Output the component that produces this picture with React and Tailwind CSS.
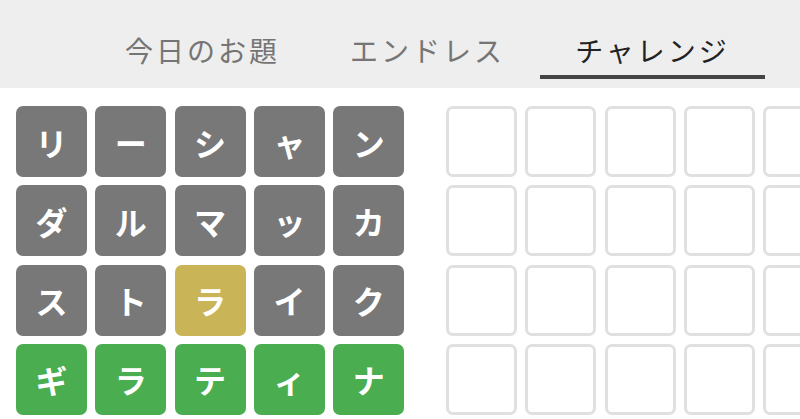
import React from 'react'

const FONT = { fontFamily: '"Noto Sans CJK JP", "Noto Sans", sans-serif' }

const TABS = ['今日のお題', 'エンドレス', 'チャレンジ']
const ACTIVE = 2

// g = 灰色, y = 位置違い, c = 正解
const ROWS = [
  [['リ', 'g'], ['ー', 'g'], ['シ', 'g'], ['ャ', 'g'], ['ン', 'g']],
  [['ダ', 'g'], ['ル', 'g'], ['マ', 'g'], ['ッ', 'g'], ['カ', 'g']],
  [['ス', 'g'], ['ト', 'g'], ['ラ', 'y'], ['イ', 'g'], ['ク', 'g']],
  [['ギ', 'c'], ['ラ', 'c'], ['テ', 'c'], ['ィ', 'c'], ['ナ', 'c']],
]

const TILE_BG = {
  g: 'bg-[#787878]',
  y: 'bg-[#c9b458]',
  c: 'bg-[#4aad4f]',
}

function Tile({ ch, kind }) {
  return (
    <div
      className={`w-[71px] h-[71px] rounded-[7px] flex items-center justify-center text-white text-[32px] font-bold leading-none ${TILE_BG[kind]}`}
    >
      {ch}
    </div>
  )
}

function EmptyTile() {
  return <div className="w-[71px] h-[71px] shrink-0 rounded-[7px] border-[3px] border-[#e0e0e0] bg-white" />
}

export default function App() {
  return (
    <div className="w-[800px] h-[419px] overflow-hidden bg-white" style={FONT}>
      <div className="h-[88px] bg-[#eeeeee] flex pl-[90px]">
        {TABS.map((t, i) => (
          <div key={t} className="w-[225px] shrink-0 flex flex-col justify-end pb-[9px]">
            <span
              className={`text-center text-[28px] leading-[36px] tracking-[3px] font-normal mb-[7px] ${
                i === ACTIVE ? 'text-[#222222]' : 'text-[#757575]'
              }`}
            >
              {t}
            </span>
            <div className={`h-[4px] w-full ${i === ACTIVE ? 'bg-[#444444]' : 'bg-transparent'}`} />
          </div>
        ))}
      </div>

      <div className="flex pt-[18px] pl-[16px] gap-[42px]">
        <div className="flex flex-col gap-[8.3px] shrink-0">
          {ROWS.map((row, r) => (
            <div key={r} className="flex gap-[8.3px]">
              {row.map(([ch, kind], c) => (
                <Tile key={c} ch={ch} kind={kind} />
              ))}
            </div>
          ))}
        </div>

        <div className="flex flex-col gap-[8.3px] shrink-0">
          {ROWS.map((_, r) => (
            <div key={r} className="flex gap-[8.3px]">
              {[0, 1, 2, 3, 4].map((c) => (
                <EmptyTile key={c} />
              ))}
            </div>
          ))}
        </div>
      </div>
    </div>
  )
}
